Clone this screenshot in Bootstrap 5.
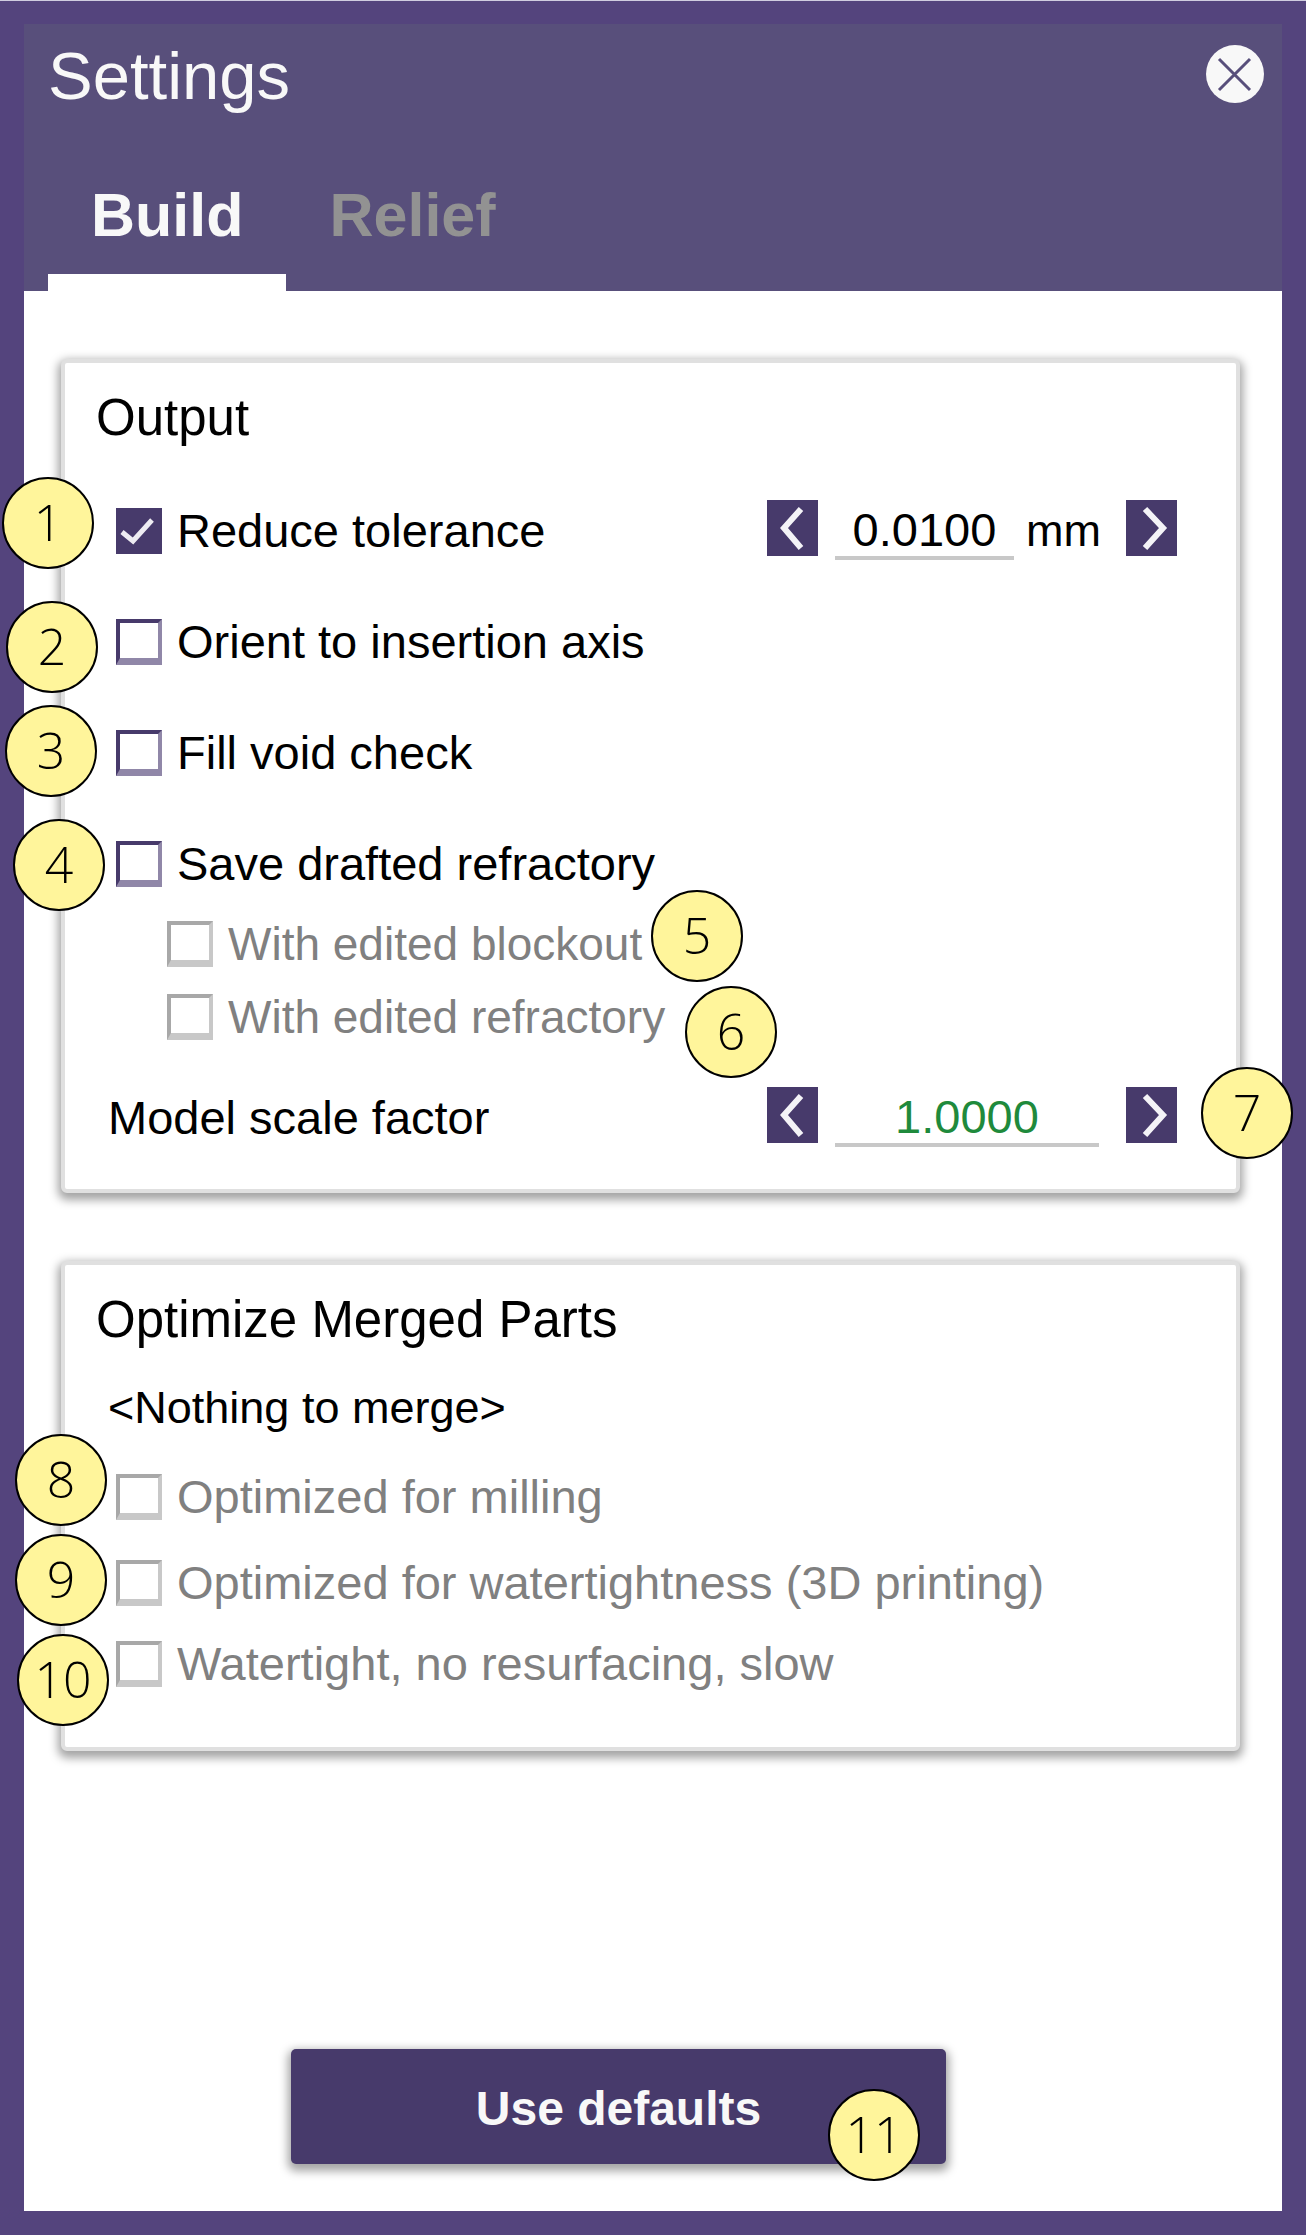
<!DOCTYPE html>
<html lang="en">
<head>
<meta charset="utf-8">
<meta name="viewport" content="width=device-width, initial-scale=1">
<title>Settings</title>
<link href="https://cdn.jsdelivr.net/npm/bootstrap@5.3.0/dist/css/bootstrap.min.css" rel="stylesheet">
<style>
  :root { --frame: #54447d; --head: #584f7b; --ink: #473a6b; }
  body { font-family: "Liberation Sans", Arial, sans-serif; font-size: 47px; line-height: 46px; color: #000; background: var(--frame); }
  .shell { min-height: 100vh; padding: 23px 24px 24px; border-top: 1px solid #d0cde0; }
  .head { background: var(--head); padding: 14px 17px 0 24px; }
  .head h1 { font-size: 67px; line-height: 76px; font-weight: 400; color: #f8f8f8; }
  .close-btn { width: 60px; height: 60px; margin-top: 6px; }
  .tabs { margin: 66px 0 0; }
  .tabs .nav-link { font-size: 61px; line-height: 70px; font-weight: 700; color: #929292; padding: 0 43px 24px; background: none; border: 0; border-bottom: 17px solid transparent; border-radius: 0; }
  .tabs .nav-link.active { color: #f8f8f8; border-color: #fff; }
  .content { background: #fff; padding: 68px 42px 47px 37px; gap: 68px; }
  .panel { border: 4px solid #e0e0e0; border-radius: 6px; background: #fff; box-shadow: 0 4px 10px 3px rgba(0,0,0,.36); }
  .panel .card-body { padding: 25px 59px 42px 28px; }
  .panel .card-body.tall { padding-bottom: 60px; }
  .panel h2 { font-size: 51px; line-height: 60px; font-weight: 400; margin: 0 0 0 3px; }
  .note { font-size: 45px; margin: 35px 0 43px 15px; }
  .check-row { position: relative; display: flex; gap: 15px; padding-left: 23px; }
  .check-row.sub { padding-left: 74px; font-size: 46px; }
  .form-check-input.tick { flex: none; width: 46px; height: 46px; margin: 0; border: 4px solid var(--ink); border-right-color: #9087a8; border-bottom: 7px solid #9087a8; border-radius: 0; background-color: #fff; }
  .form-check-input.tick:checked { border-color: var(--ink); border-bottom-width: 4px; background-color: var(--ink); background-origin: border-box; background-size: 46px 46px;
    background-image: url("data:image/svg+xml,%3Csvg xmlns='http://www.w3.org/2000/svg' viewBox='0 0 46 46'%3E%3Cpath d='M6 24 17 33 36 12' fill='none' stroke='%23eeecf2' stroke-width='5'/%3E%3C/svg%3E"); }
  .form-check-input.tick:disabled { opacity: 1; border-color: #a8a8a8 #c8c8c8 #c8c8c8 #a8a8a8; }
  .form-check-input.tick:disabled + label { color: #808080; opacity: 1; }
  .g-first { margin-top: 52px; }
  .g-value { margin-bottom: 59px; }
  .g-wide { margin-bottom: 65px; }
  .g-sub { margin-bottom: 34px; }
  .g-tight { margin-bottom: 27px; }
  .g-scale { margin-bottom: 47px; }
  .g-opt { margin-bottom: 40px; }
  .g-last { margin-bottom: 35px; }
  .value-row { position: relative; }
  .value-row > .check-row, .value-row > label, .unit { padding-top: 8px; }
  .value-row > label { margin-left: 15px; }
  .stepper { width: 410px; }
  .step { width: 51px; height: 56px; background: var(--ink); }
  .field { height: 60px; margin-left: 17px; border: 0; border-bottom: 4px solid #c8c8c8; padding: 6px 0 4px; line-height: 46px; text-align: center; background: none; color: #000; }
  .field.short { width: 179px; }
  .field.long { width: 264px; color: #1f8a3c; }
  .unit { font-size: 45px; margin-left: 12px; }
  .foot { margin: auto 0 0; padding-right: 64px; }
  .defaults { width: 655px; height: 115px; font-size: 48px; font-weight: 700; color: #f8f8f8; background: var(--ink); border-radius: 5px; box-shadow: 0 4px 10px 3px rgba(0,0,0,.36); }
  /* numbered callouts that lie over the dialog */
  .pin { position: absolute; width: 92px; height: 92px; border: 2px solid #000; border-radius: 50%; background: #fff59b; color: #000; font: 300 50px/86px "Open Sans", sans-serif; text-align: center; z-index: 2; }
  .p1 { left: -91px; top: -23px; } .p2 { left: -87px; top: -18px; } .p3 { left: -88px; top: -25px; } .p4 { left: -80px; top: -22px; }
  .p5 { left: 558px; top: -31px; } .p6 { left: 592px; top: -8px; } .p7 { right: -116px; top: -20px; }
  .p8 { left: -78px; top: -40px; } .p9 { left: -78px; top: -26px; } .p10 { left: -76px; top: -7px; }
  .p11 { right: 26px; bottom: -17px; }
</style>
</head>
<body>
<div class="shell d-flex flex-column">
  <header class="head">
    <div class="d-flex justify-content-between align-items-start">
      <h1 class="m-0">Settings</h1>
      <button type="button" class="close-btn btn p-0 border-0 d-flex" aria-label="Close">
        <svg width="60" height="60" viewBox="0 0 60 60" aria-hidden="true"><circle cx="30" cy="30" r="29" fill="#f8f8f8"/><path d="M14 15 45 46M45 15 14 46" stroke="#584f7b" stroke-width="3"/></svg>
      </button>
    </div>
    <nav class="nav tabs">
      <button type="button" class="nav-link active" aria-current="page">Build</button>
      <button type="button" class="nav-link">Relief</button>
    </nav>
  </header>

  <main class="content d-flex flex-column flex-grow-1">
    <section class="card panel">
      <div class="card-body">
        <h2>Output</h2>
        <div class="value-row g-first g-value d-flex justify-content-between align-items-start">
          <div class="check-row">
            <input class="form-check-input tick" type="checkbox" id="tolerance" checked>
            <label for="tolerance">Reduce tolerance</label>
          </div>
          <div class="stepper d-flex align-items-start">
            <button type="button" class="step btn p-0 border-0 rounded-0 d-flex" aria-label="Decrease tolerance"><svg width="51" height="56" viewBox="0 0 51 56"><path d="M34 9 17 28 34 48" fill="none" stroke="#f4f3f7" stroke-width="6"/></svg></button>
            <input class="field short" type="text" value="0.0100" aria-label="Tolerance">
            <span class="unit">mm</span>
            <button type="button" class="step btn p-0 border-0 rounded-0 d-flex ms-auto" aria-label="Increase tolerance"><svg width="51" height="56" viewBox="0 0 51 56"><path d="M19 9 37 28 19 48" fill="none" stroke="#f4f3f7" stroke-width="6"/></svg></button>
          </div>
          <span class="pin p1">1</span>
        </div>
        <div class="check-row g-wide">
          <input class="form-check-input tick" type="checkbox" id="orient"><label for="orient">Orient to insertion axis</label>
          <span class="pin p2">2</span>
        </div>
        <div class="check-row g-wide">
          <input class="form-check-input tick" type="checkbox" id="fill"><label for="fill">Fill void check</label>
          <span class="pin p3">3</span>
        </div>
        <div class="check-row g-sub">
          <input class="form-check-input tick" type="checkbox" id="save"><label for="save">Save drafted refractory</label>
          <span class="pin p4">4</span>
        </div>
        <div class="check-row sub g-tight">
          <input class="form-check-input tick" type="checkbox" id="blockout" disabled><label for="blockout">With edited blockout</label>
          <span class="pin p5">5</span>
        </div>
        <div class="check-row sub g-scale">
          <input class="form-check-input tick" type="checkbox" id="refractory" disabled><label for="refractory">With edited refractory</label>
          <span class="pin p6">6</span>
        </div>
        <div class="value-row d-flex justify-content-between align-items-start">
          <label for="scale">Model scale factor</label>
          <div class="stepper d-flex align-items-start">
            <button type="button" class="step btn p-0 border-0 rounded-0 d-flex" aria-label="Decrease scale"><svg width="51" height="56" viewBox="0 0 51 56"><path d="M34 9 17 28 34 48" fill="none" stroke="#f4f3f7" stroke-width="6"/></svg></button>
            <input class="field long" type="text" value="1.0000" id="scale">
            <button type="button" class="step btn p-0 border-0 rounded-0 d-flex ms-auto" aria-label="Increase scale"><svg width="51" height="56" viewBox="0 0 51 56"><path d="M19 9 37 28 19 48" fill="none" stroke="#f4f3f7" stroke-width="6"/></svg></button>
          </div>
          <span class="pin p7">7</span>
        </div>
      </div>
    </section>

    <section class="card panel">
      <div class="card-body tall">
        <h2>Optimize Merged Parts</h2>
        <p class="note">&lt;Nothing to merge&gt;</p>
        <div class="check-row g-opt">
          <input class="form-check-input tick" type="checkbox" id="milling" disabled><label for="milling">Optimized for milling</label>
          <span class="pin p8">8</span>
        </div>
        <div class="check-row g-last">
          <input class="form-check-input tick" type="checkbox" id="printing" disabled><label for="printing">Optimized for watertightness (3D printing)</label>
          <span class="pin p9">9</span>
        </div>
        <div class="check-row">
          <input class="form-check-input tick" type="checkbox" id="slow" disabled><label for="slow">Watertight, no resurfacing, slow</label>
          <span class="pin p10">10</span>
        </div>
      </div>
    </section>

    <footer class="foot d-flex justify-content-center">
      <div class="position-relative">
        <button type="button" class="defaults btn border-0 px-0 pt-1 pb-0">Use defaults</button>
        <span class="pin p11">11</span>
      </div>
    </footer>
  </main>
</div>
<script src="https://cdn.jsdelivr.net/npm/bootstrap@5.3.0/dist/js/bootstrap.bundle.min.js"></script>
</body>
</html>
